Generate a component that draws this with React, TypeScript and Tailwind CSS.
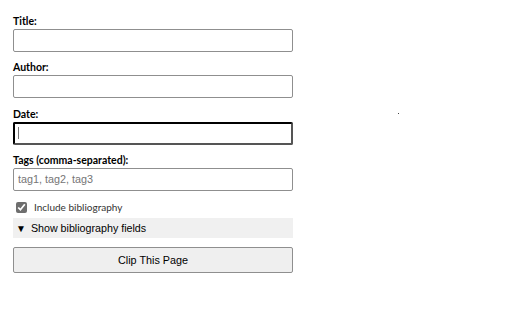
import { useState } from 'react'

const fields = [
  { id: 'title', label: 'Title:', placeholder: '' },
  { id: 'author', label: 'Author:', placeholder: '' },
  { id: 'date', label: 'Date:', placeholder: '' },
  { id: 'tags', label: 'Tags (comma-separated):', placeholder: 'tag1, tag2, tag3' },
]

export default function App() {
  const [bib, setBib] = useState(true)

  return (
    <div className="relative w-[512px] h-[320px] bg-white px-[13px] pt-[14px] font-['Liberation_Sans',Arial,sans-serif]">
      <div className="w-[280px]">
        {fields.map((f) => (
          <div key={f.id} className="mb-[8.33px]">
            <label
              htmlFor={f.id}
              className="block text-[10.5px] leading-[14px] font-bold text-black mb-[1px] font-['Lato','Open_Sans',sans-serif]"
            >
              {f.label}
            </label>
            {f.id === 'date' ? (
              <div className="relative">
                <input
                  id={f.id}
                  type="text"
                  className="block w-full h-[23px] px-[4px] text-[11px] border-2 border-t-black border-l-black border-r-[#555] border-b-[#555] rounded-[2px] outline-none"
                />
                <span className="absolute left-[5px] top-[5px] w-px h-[12px] bg-[#777]" />
              </div>
            ) : (
              <input
                id={f.id}
                type="text"
                placeholder={f.placeholder}
                className="block w-full h-[23px] px-[4px] text-[10.8px] border border-[#8f8f8f] rounded-[2px] outline-none placeholder:text-[#757575]"
              />
            )}
          </div>
        ))}

        <label className="flex items-center gap-[7px] pl-[3px] mt-[10.5px] h-[13px] text-[10px] text-[#333] font-['Lato','Open_Sans',sans-serif]">
          <input
            type="checkbox"
            checked={bib}
            onChange={(e) => setBib(e.target.checked)}
            className="w-[11px] h-[11px] m-0 accent-[#6e6e6e]"
          />
          Include bibliography
        </label>

        <details className="mt-[4px]">
          <summary className="list-none h-[20px] flex items-center pl-[3px] bg-[#f0f0f0] text-[10.7px] text-black cursor-pointer">
            <span className="text-[10px] mr-[5px]">▼</span>
            Show bibliography fields
          </summary>
        </details>

        <button className="mt-[9px] block w-full h-[26px] bg-[#efefef] border border-[#8f8f8f] rounded-[2px] text-[10.8px] text-black">
          Clip This Page
        </button>
      </div>
      <span className="absolute left-[398px] top-[113px] w-px h-px bg-[#444]" />
    </div>
  )
}
